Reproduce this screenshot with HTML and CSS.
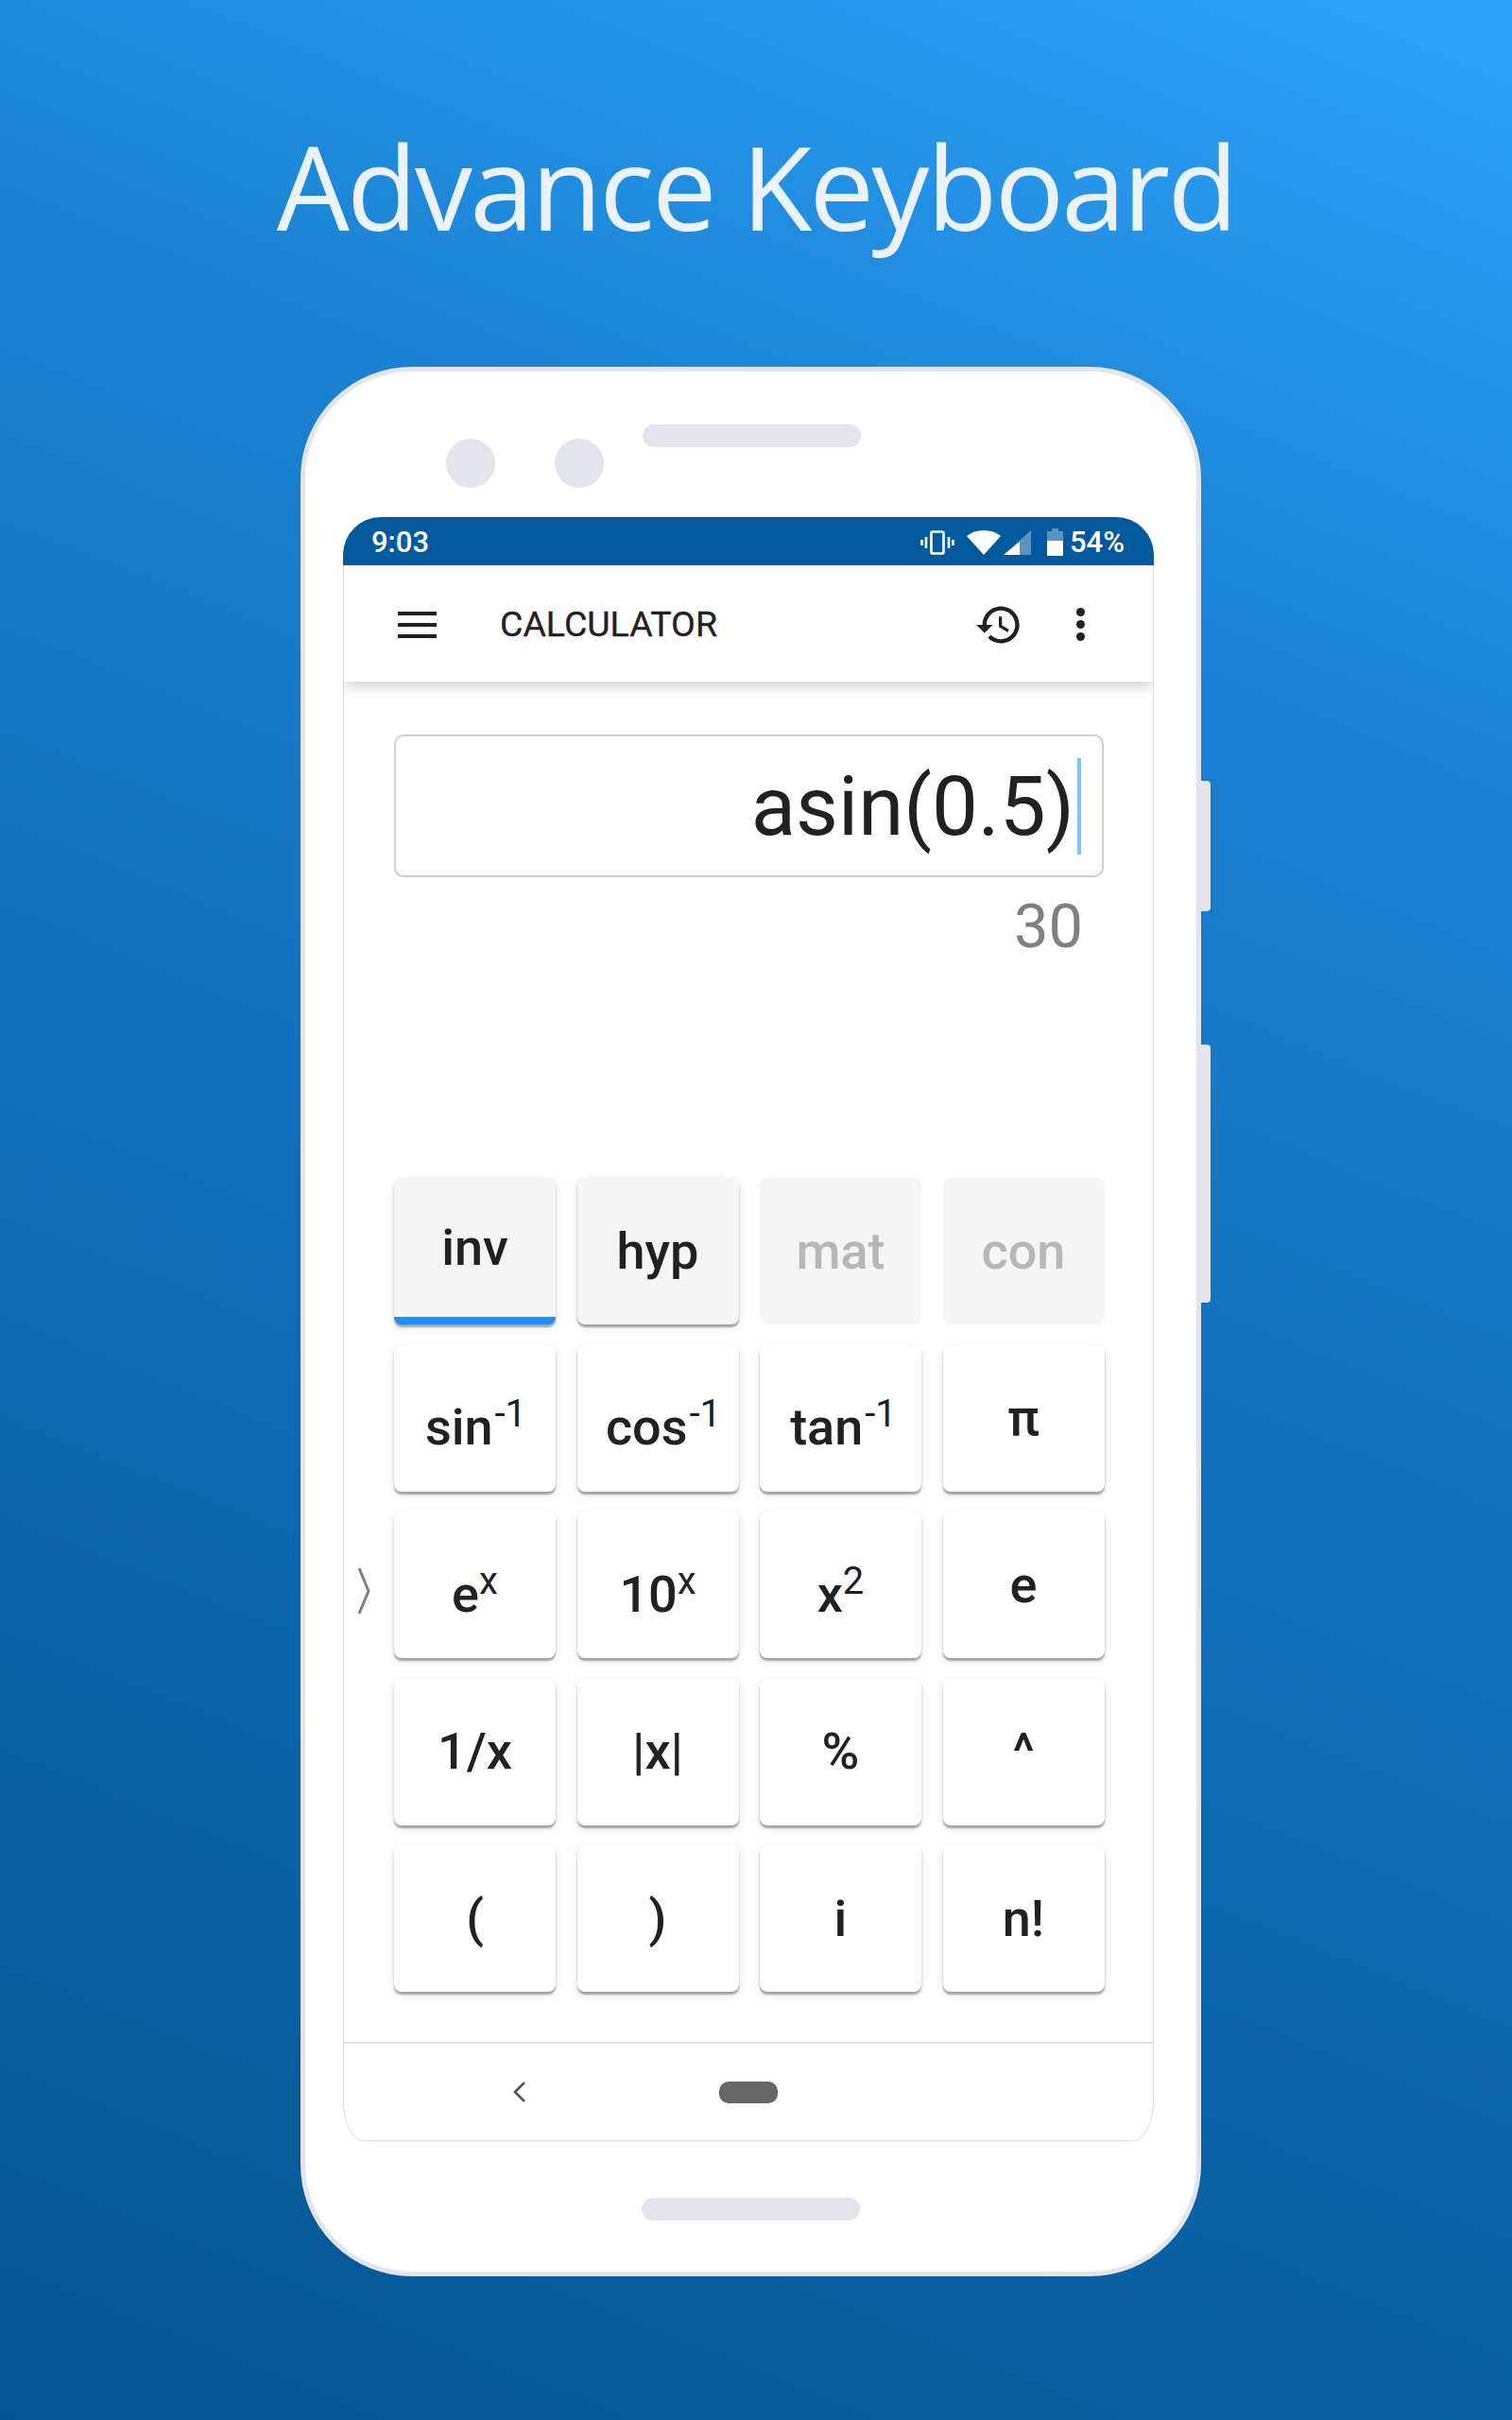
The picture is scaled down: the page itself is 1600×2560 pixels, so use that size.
FILE: index.html
```html
<!DOCTYPE html>
<html lang="en">
<head>
<meta charset="utf-8">
<title>Advance Keyboard</title>
<link rel="stylesheet" href="styles.css">
</head>
<body>
<main class="poster">
  <h1 class="title">Advance Keyboard</h1>
  <div class="phone">
    <span class="side side-a"></span>
    <span class="side side-b"></span>
    <div class="bezel-top">
      <span class="cam"></span>
      <span class="cam"></span>
      <span class="speaker"></span>
    </div>
    <div class="screen">
      <div class="status">
        <span class="time">9:03</span>
        <span class="status-right">
          <svg class="ic-vib" viewBox="0 0 36 26"><g fill="none" stroke="#fff" stroke-width="2.6"><rect x="11.5" y="1.5" width="13" height="23" rx="1.5"/><path d="M6 7v12M1.5 10v6M30 7v12M34.5 10v6"/></g></svg>
          <svg class="ic-wifi" viewBox="0 0 36 26"><path d="M0 6C5 2 11 0 18 0s13 2 18 6L18 26z" fill="#fff"/></svg>
          <svg class="ic-sig" viewBox="0 0 29 26"><path d="M29 0v26H0z" fill="#fff" fill-opacity=".35"/><path d="M17 12v14H0z" fill="#fff"/></svg>
          <svg class="ic-bat" viewBox="0 0 17 29"><path d="M5 0h7v3h5v10H0V3h5z" fill="#fff" fill-opacity=".35"/><path d="M0 13h17v16H0z" fill="#fff"/></svg>
          <span class="pct">54%</span>
        </span>
      </div>
      <header class="toolbar">
        <span class="menu"><i></i><i></i><i></i></span>
        <span class="app-name">CALCULATOR</span>
        <svg class="ic-history" viewBox="0 0 24 24"><path fill="#212121" d="M13 3c-4.97 0-9 4.03-9 9H1l3.89 3.89.07.14L9 12H6c0-3.87 3.13-7 7-7s7 3.13 7 7-3.13 7-7 7c-1.93 0-3.68-.79-4.94-2.06l-1.42 1.42C8.27 19.99 10.51 21 13 21c4.97 0 9-4.03 9-9s-4.03-9-9-9zm-1 5v5l4.28 2.54.72-1.21-3.5-2.08V8H12z"/></svg>
        <span class="more"><i></i><i></i><i></i></span>
      </header>
      <div class="content">
        <div class="display">
          <span class="expr">asin(0.5)</span><span class="caret"></span>
        </div>
        <div class="result">30</div>
        <div class="pad-row">
          <svg class="ic-drawer" viewBox="0 0 14 50"><path d="M2 1l10 24L2 49" fill="none" stroke="#808080" stroke-width="3"/></svg>
          <div class="keys">
            <button class="key soft on">inv</button>
            <button class="key soft">hyp</button>
            <button class="key off">mat</button>
            <button class="key off">con</button>
            <button class="key pow inverse nudge-sin">sin<sup>-1</sup></button>
            <button class="key pow inverse nudge-cos">cos<sup>-1</sup></button>
            <button class="key pow inverse nudge-tan">tan<sup>-1</sup></button>
            <button class="key">π</button>
            <button class="key pow">e<sup>x</sup></button>
            <button class="key pow">10<sup>x</sup></button>
            <button class="key pow">x<sup>2</sup></button>
            <button class="key">e</button>
            <button class="key">1/x</button>
            <button class="key">|x|</button>
            <button class="key">%</button>
            <button class="key">^</button>
            <button class="key">(</button>
            <button class="key">)</button>
            <button class="key">i</button>
            <button class="key">n!</button>
          </div>
        </div>
      </div>
      <nav class="nav">
        <svg class="ic-back" viewBox="0 0 15 22"><path d="M13 1L3 11l10 10" fill="none" stroke="#555" stroke-width="2.6"/></svg>
        <span class="home"></span>
      </nav>
    </div>
    <div class="bezel-bottom"><span class="speaker"></span></div>
  </div>
</main>
</body>
</html>
```
FILE: styles.css
```css
* { box-sizing: border-box; }
html, body { margin: 0; padding: 0; }
body { width: 1600px; height: 2560px; overflow: hidden; }

.poster {
  width: 1600px;
  height: 2560px;
  display: flex;
  flex-direction: column;
  align-items: center;
  background: linear-gradient(202deg, #2fa2f8 0%, #1a80d0 28%, #0f6cb6 58%, #03548f 100%);
}
.title {
  margin: 0;
  height: 388px;
  padding-top: 122px;
  font: 400 122px/150px "Open Sans", sans-serif;
  color: #eaf3fb;
  letter-spacing: -2.75px;
  white-space: nowrap;
}

.phone {
  position: relative;
  width: 953px;
  height: 2020px;
  margin-left: -11px;
  padding: 0 45px 0 40px;
  background: #fff;
  border: 5px solid #e3e4ec;
  border-radius: 118px;
  display: flex;
  flex-direction: column;
}
.side {
  position: absolute;
  left: 948px;
  width: 10px;
  background: #e3e4ec;
  border-radius: 0 4px 4px 0;
}
.side-a { top: 433px; height: 138px; }
.side-b { top: 712px; height: 273px; }

.bezel-top {
  height: 154px;
  flex: none;
  display: flex;
  align-items: flex-start;
  padding: 71px 0 0 109px;
}
.cam {
  width: 52px;
  height: 52px;
  border-radius: 50%;
  background: #e3e4ec;
  margin-right: 63px;
}
.speaker {
  width: 231px;
  height: 24px;
  border-radius: 12px;
  background: #e3e4ec;
}
.bezel-top .speaker { margin: -15px 0 0 -22px; }
.bezel-bottom {
  flex: 1;
  display: flex;
  justify-content: center;
  padding: 60px 0 0 5px;
}

.screen {
  flex: none;
  height: 1718px;
  border: 1px solid #dcdcdc;
  border-top: 0;
  border-radius: 40px 40px 22px 22px / 40px 40px 42px 42px;
  display: flex;
  flex-direction: column;
  font-family: Roboto, sans-serif;
  color: #212121;
}
.status {
  height: 51px;
  margin: 0 -1px;
  flex: none;
  background: #03599d;
  border-radius: 40px 40px 0 0;
  display: flex;
  align-items: center;
  justify-content: space-between;
  padding: 2px 31px 0 30px;
  color: #fff;
  font-size: 31px;
  font-weight: 500;
}
.status-right { display: flex; align-items: center; }
.ic-vib { width: 36px; height: 26px; margin-right: 13px; }
.ic-wifi { width: 36px; height: 26px; margin-right: 3px; }
.ic-sig { width: 29px; height: 26px; margin-right: 17px; }
.ic-bat { width: 17px; height: 29px; margin-right: 7px; }

.toolbar {
  height: 123px;
  flex: none;
  display: flex;
  align-items: center;
  padding: 0 0 0 57px;
  background: #fff;
  box-shadow: 0 6px 14px rgba(0, 0, 0, .16);
  clip-path: inset(0 0 -30px 0);
  position: relative;
}
.menu { width: 41px; display: flex; flex-direction: column; gap: 8px; margin-top: 3px; }
.menu i { height: 4px; background: #212121; }
.app-name {
  margin-left: 67px;
  font-size: 37.5px;
  font-weight: 400;
  flex: 1;
  -webkit-text-stroke: .3px #212121;
}
.ic-history { width: 52px; height: 52px; margin: 2px 56px 0 0; }
.more { display: flex; flex-direction: column; gap: 4px; margin: 2px 72px 0 0; }
.more i { width: 9px; height: 9px; border-radius: 50%; background: #212121; }

.content {
  flex: 1;
  display: flex;
  flex-direction: column;
  padding: 56px 52px 0 0;
}
.display {
  width: 751px;
  height: 151px;
  margin-left: 53px;
  border: 2px solid #cfcfcf;
  border-radius: 10px;
  display: flex;
  align-items: center;
  justify-content: flex-end;
  padding-right: 22px;
}
.expr { font-size: 87px; line-height: 1; padding-top: 2px; }
.caret { width: 4px; height: 102px; margin-left: 3px; background: #7fc0ff; }
.result {
  margin-top: 19px;
  height: 66px;
  text-align: right;
  padding-right: 22px;
  font-size: 65px;
  line-height: 66px;
  color: #808080;
}
.pad-row {
  margin-top: 233px;
  display: flex;
  align-items: center;
}
.ic-drawer { width: 14px; height: 50px; margin: 12px 25px 0 14px; flex: none; }
.keys {
  display: grid;
  grid-template-columns: repeat(4, 171px);
  grid-auto-rows: 155px;
  column-gap: 22.5px;
  row-gap: 21.5px;
}
.key {
  padding: 0;
  border: 0;
  border-radius: 8px;
  background: #fff;
  color: #212121;
  font: 500 54px/60px Roboto, sans-serif;
  box-shadow: 0 3px 2px rgba(0, 0, 0, .32), 0 3px 10px rgba(0, 0, 0, .1);
}
.key sup { font-size: 40px; font-weight: 400; line-height: 1; vertical-align: 19px; }
.inverse sup { margin-left: 2px; }
.pow { padding-top: 16px; }
.nudge-sin { padding-left: 2px; }
.nudge-cos { padding-left: 12px; }
.nudge-tan { padding-left: 6px; }
.soft { background: #f5f5f5; }
.on { border-bottom: 8px solid #1b90fb; }
.off { background: #f5f5f5; color: #b7b7b7; box-shadow: none; }

.nav {
  height: 104px;
  flex: none;
  border-top: 2px solid #e2e2e2;
  display: flex;
  align-items: center;
  padding: 0 0 0 178px;
}
.ic-back { width: 15px; height: 22px; }
.home {
  width: 62px;
  height: 23px;
  margin-left: 204px;
  border-radius: 10px;
  background: #666;
}
```
